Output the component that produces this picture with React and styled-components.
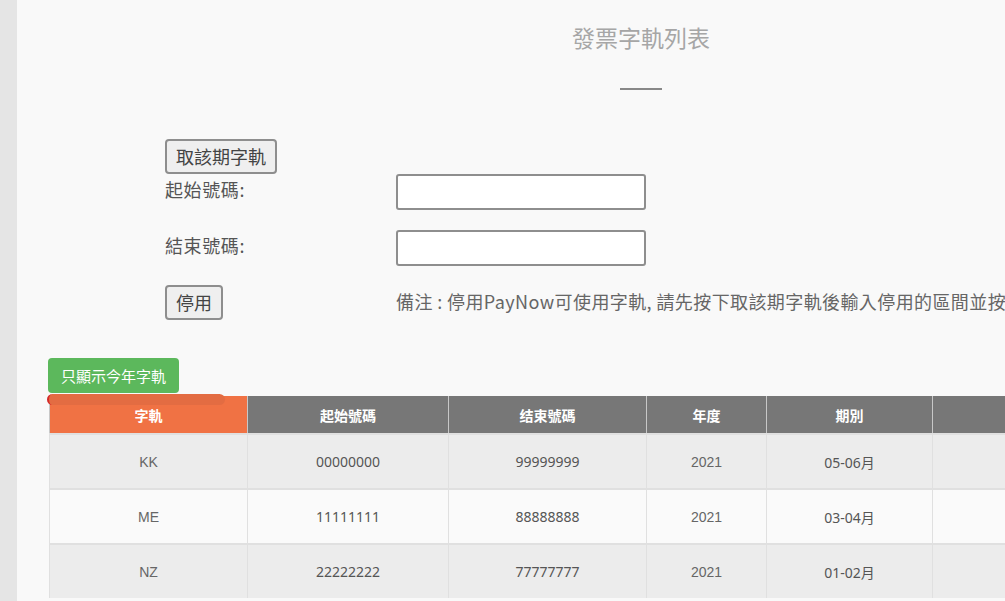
import React from "react";
import styled, { createGlobalStyle } from "styled-components";

const GlobalStyle = createGlobalStyle`
    html, body {
        margin: 0;
        padding: 0;
        background: #f9f9f9;
        overflow: hidden;
        font-family: "Noto Sans CJK TC", "Noto Sans", sans-serif;
    }
`;

const rows = [
    { code: "KK", start: "00000000", end: "99999999", year: "2021", period: "05-06月" },
    { code: "ME", start: "11111111", end: "88888888", year: "2021", period: "03-04月" },
    { code: "NZ", start: "22222222", end: "77777777", year: "2021", period: "01-02月" },
];

const columns = [
    { label: "字軌", width: 198, accent: true },
    { label: "起始號碼", width: 201 },
    { label: "结束號碼", width: 198 },
    { label: "年度", width: 120 },
    { label: "期別", width: 166 },
    { label: "", width: 301 },
];

const App = () => {
    return (
        <>
            <GlobalStyle />
            <Shell>
                <SideStrip />
                <Main>
                    <Header>
                        <h2>發票字軌列表</h2>
                        <Rule />
                    </Header>

                    <Form>
                        <Button type="button">取該期字軌</Button>
                        <FieldRow $gap={0}>
                            <Label>起始號碼:</Label>
                            <Input type="text" />
                        </FieldRow>
                        <FieldRow $gap={20}>
                            <Label>結束號碼:</Label>
                            <Input type="text" />
                        </FieldRow>
                        <FieldRow $gap={19} $center>
                            <Cell>
                                <Button type="button">停用</Button>
                            </Cell>
                            <Note>
                                備注 : 停用PayNow可使用字軌, 請先按下取該期字軌後輸入停用的區間並按下停用
                            </Note>
                        </FieldRow>
                    </Form>

                    <Toolbar>
                        <GreenButton type="button">只顯示今年字軌</GreenButton>
                    </Toolbar>

                    <TableWrap>
                        <Blob />
                        <Table>
                            <colgroup>
                                {columns.map((c, i) => (
                                    <col key={i} style={{ width: c.width }} />
                                ))}
                            </colgroup>
                            <thead>
                                <tr>
                                    {columns.map((c, i) => (
                                        <Th key={i} $accent={c.accent}>
                                            {c.label}
                                        </Th>
                                    ))}
                                </tr>
                            </thead>
                            <tbody>
                                {rows.map((r, i) => (
                                    <Tr key={r.code} $odd={i % 2 === 0}>
                                        <Td $latin>{r.code}</Td>
                                        <Td>{r.start}</Td>
                                        <Td>{r.end}</Td>
                                        <Td $latin>{r.year}</Td>
                                        <Td>{r.period}</Td>
                                        <Td />
                                    </Tr>
                                ))}
                            </tbody>
                        </Table>
                    </TableWrap>
                </Main>
            </Shell>
        </>
    );
};

const Shell = styled.div`
    display: flex;
    height: 601px;
    overflow: hidden;
`;

const SideStrip = styled.div`
    flex: 0 0 17px;
    background: #e5e5e5;
`;

const Main = styled.div`
    flex: 0 0 1248px;
    background: #f9f9f9;
`;

const Header = styled.div`
    padding-top: 22px;
    text-align: center;
    h2 {
        margin: 0;
        font-size: 23px;
        line-height: 30px;
        font-weight: 400;
        color: #a6a6a6;
    }
`;

const Rule = styled.div`
    width: 42px;
    height: 2px;
    margin: 36px auto 0;
    background: #888;
`;

const Form = styled.div`
    margin-top: 49px;
    padding-left: 148px;
    display: flex;
    flex-direction: column;
    align-items: flex-start;
`;

const FieldRow = styled.div`
    display: grid;
    grid-template-columns: 231px auto;
    align-items: ${(p) => (p.$center ? "center" : "start")};
    margin-top: ${(p) => p.$gap}px;
`;

const Cell = styled.div`
    display: flex;
`;

const Label = styled.label`
    padding-top: 2px;
    font-size: 18px;
    line-height: 26px;
    letter-spacing: 0.6px;
    color: #555;
`;

const Button = styled.button`
    height: 35px;
    padding: 0 9px;
    font-family: "Noto Sans CJK TC", sans-serif;
    font-size: 18px;
    line-height: 31px;
    color: #444;
    background: #efefef;
    border: 2px solid #8e8e8e;
    border-radius: 4px;
`;

const Input = styled.input`
    box-sizing: border-box;
    width: 250px;
    height: 36px;
    background: #fff;
    border: 2px solid #8e8e8e;
    border-radius: 3px;
`;

const Note = styled.p`
    margin: 0 0 4px;
    font-size: 18px;
    line-height: 26px;
    letter-spacing: 0.4px;
    color: #666;
    white-space: nowrap;
`;

const Toolbar = styled.div`
    margin-top: 38px;
    padding-left: 31px;
`;

const GreenButton = styled.button`
    height: 35px;
    padding: 0 13px;
    font-family: "Noto Sans CJK TC", sans-serif;
    font-size: 15px;
    color: #fff;
    background: #5cb85c;
    border: none;
    border-radius: 4px;
`;

const TableWrap = styled.div`
    position: relative;
    margin-top: 3px;
    margin-left: 32px;
`;

const Blob = styled.span`
    position: absolute;
    top: -2px;
    left: -2px;
    width: 176px;
    height: 11px;
    border-radius: 6px;
    background: #e36c42;
    border-left: 2px solid #d42a2a;
    z-index: 1;
`;

const Table = styled.table`
    border-collapse: collapse;
    table-layout: fixed;
    width: 1184px;
`;

const Th = styled.th`
    height: 37px;
    padding: 0;
    font-size: 14px;
    font-weight: 700;
    color: #fff;
    background: ${(p) => (p.$accent ? "#f07244" : "#777")};
    border: 1px solid #c8c8c8;
    border-top: none;
`;

const Tr = styled.tr`
    background: ${(p) => (p.$odd ? "#ececec" : "#fafafa")};
`;

const Td = styled.td`
    height: 53px;
    padding: 0;
    text-align: center;
    font-family: ${(p) =>
        p.$latin ? `"Liberation Sans", Arial, sans-serif` : `"Noto Sans", "Noto Sans CJK TC", sans-serif`};
    font-size: 14px;
    color: ${(p) => (p.$latin ? "#666" : "#555")};
    border: 1px solid #e0e0e0;
    border-width: 2px 1px 0;
`;

export default App;
